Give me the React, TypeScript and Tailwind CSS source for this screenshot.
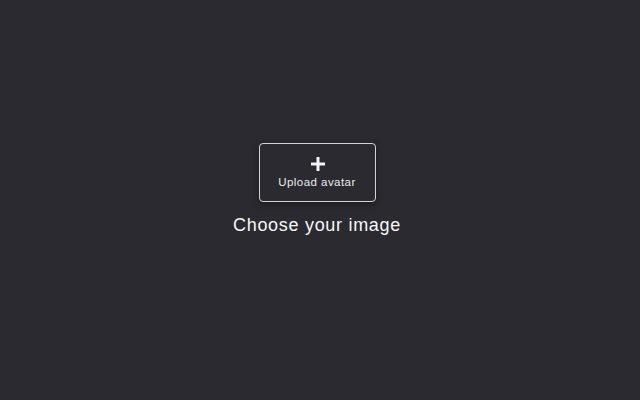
import React from 'react';

export default function App() {
  return (
    <div
      className="w-[640px] h-[400px] bg-[#2b2a30] flex flex-col items-center pt-[143px] pr-[6px]"
      style={{ fontFamily: '"Liberation Sans", Arial, sans-serif' }}
    >
      <button className="w-[117px] h-[59px] rounded-[4px] border border-[#d4d4d8] bg-[#2b2a30] flex flex-col items-center justify-center gap-[3px] shadow-[0_2px_6px_rgba(0,0,0,0.4)]">
        <svg width="16" height="16" viewBox="0 0 16 16" className="text-[#f4f4f5] ml-[2px]">
          <path d="M8 1v14M1 8h14" stroke="currentColor" strokeWidth="3" />
        </svg>
        <span className="text-[11.5px] leading-[14px] text-[#ececef] tracking-[0.45px]">Upload avatar</span>
      </button>
      <p className="mt-[11px] text-[18px] leading-[24px] text-[#f7f7f8] tracking-[0.7px]">Choose your image</p>
    </div>
  );
}
